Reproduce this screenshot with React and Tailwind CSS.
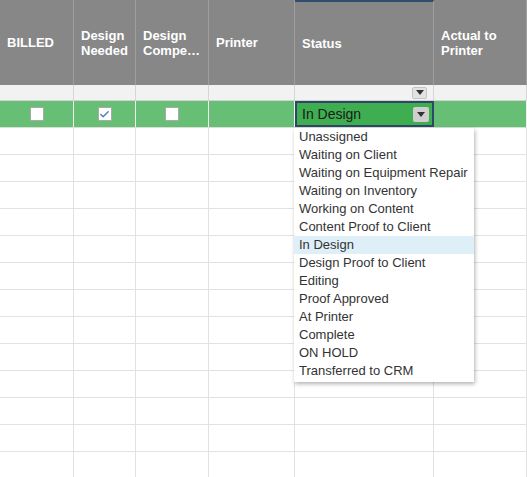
import { Check } from "lucide-react";

// ─── Data ───────────────────────────────────────────────────────────────────
const columns = [
  { key: "billed", label: ["BILLED"], width: "w-[74px]" },
  { key: "needed", label: ["Design", "Needed"], width: "w-[62px]" },
  { key: "comp", label: ["Design", "Compe…"], width: "w-[73px]" },
  { key: "printer", label: ["Printer"], width: "w-[86px]" },
  { key: "status", label: ["Status"], width: "w-[139px]" },
  { key: "actual", label: ["Actual to", "Printer"], width: "w-[93px]" },
];

const statuses = [
  "Unassigned",
  "Waiting on Client",
  "Waiting on Equipment Repair",
  "Waiting on Inventory",
  "Working on Content",
  "Content Proof to Client",
  "In Design",
  "Design Proof to Client",
  "Editing",
  "Proof Approved",
  "At Printer",
  "Complete",
  "ON HOLD",
  "Transferred to CRM",
];

const emptyRows = Array.from({ length: 13 });

// ─── Bits ───────────────────────────────────────────────────────────────────
const Arrow = () => (
  <span className="w-0 h-0 border-l-[4px] border-r-[4px] border-t-[5px] border-l-transparent border-r-transparent border-t-[#333]" />
);

const Checkbox = ({ checked }) => (
  <div className="w-[14px] h-[14px] bg-white border border-[#a9a9a9] flex items-center justify-center">
    {checked && <Check size={11} strokeWidth={3} className="text-[#4a7fb8]" />}
  </div>
);

// ─── App ────────────────────────────────────────────────────────────────────
export default function App() {
  return (
    <div
      className="relative w-[527px] h-[477px] overflow-hidden bg-white text-[13px]"
      style={{ fontFamily: '"Liberation Sans", Arial, sans-serif' }}
    >
      {/* Header */}
      <div className="flex h-[85px] bg-[#878787]">
        {columns.map((col) => (
          <div
            key={col.key}
            className={`${col.width} shrink-0 border-r border-[#9e9e9e] px-[7px] flex flex-col justify-center text-white font-bold leading-[15px] ${
              col.key === "status" ? "border-t-2 border-t-[#2f4d6d]" : ""
            }`}
          >
            {col.label.map((l) => (
              <span key={l} className="whitespace-nowrap">
                {l}
              </span>
            ))}
          </div>
        ))}
      </div>

      {/* Filter row */}
      <div className="flex h-[16px] bg-[#f2f2f2] border-b border-[#d2d2d2]">
        {columns.map((col) => (
          <div
            key={col.key}
            className={`${col.width} shrink-0 border-r border-[#d6d6d6] flex items-center justify-end pr-[6px]`}
          >
            {col.key === "status" && (
              <div className="w-[15px] h-[12px] bg-[#e2e2e2] border border-[#c4c4c4] rounded-[2px] flex items-center justify-center">
                <Arrow />
              </div>
            )}
          </div>
        ))}
      </div>

      {/* Selected row */}
      <div className="flex h-[27px] bg-[#66bf74] border-b border-[#dcdcdc]">
        {columns.map((col) =>
          col.key === "status" ? (
            <div
              key={col.key}
              className={`${col.width} shrink-0 bg-[#3fae51] border-2 border-[#2c4866] flex items-center justify-between pl-[5px] pr-[3px] text-[#1a1a1a] text-[14px]`}
            >
              <span>In Design</span>
              <div className="w-[16px] h-[15px] bg-[#cfcfcf] rounded-[2px] flex items-center justify-center">
                <Arrow />
              </div>
            </div>
          ) : (
            <div
              key={col.key}
              className={`${col.width} shrink-0 border-r border-[#f0f0f0] flex items-center justify-center`}
            >
              {col.key === "billed" && <Checkbox />}
              {col.key === "needed" && <Checkbox checked />}
              {col.key === "comp" && <Checkbox />}
            </div>
          )
        )}
      </div>

      {/* Empty rows */}
      {emptyRows.map((_, i) => (
        <div key={i} className="flex h-[27px] border-b border-[#e2e2e2]">
          {columns.map((col) => (
            <div key={col.key} className={`${col.width} shrink-0 border-r border-[#e2e2e2]`} />
          ))}
        </div>
      ))}

      {/* Status dropdown */}
      <ul className="absolute left-[294px] top-[128px] w-[180px] bg-white pb-[2px] shadow-[1px_2px_4px_rgba(0,0,0,0.3)] text-[#333] text-[13px] leading-[18px]">
        {statuses.map((s) => (
          <li
            key={s}
            className={`px-[5px] whitespace-nowrap ${s === "In Design" ? "bg-[#dfeff8]" : ""}`}
          >
            {s}
          </li>
        ))}
      </ul>
    </div>
  );
}
